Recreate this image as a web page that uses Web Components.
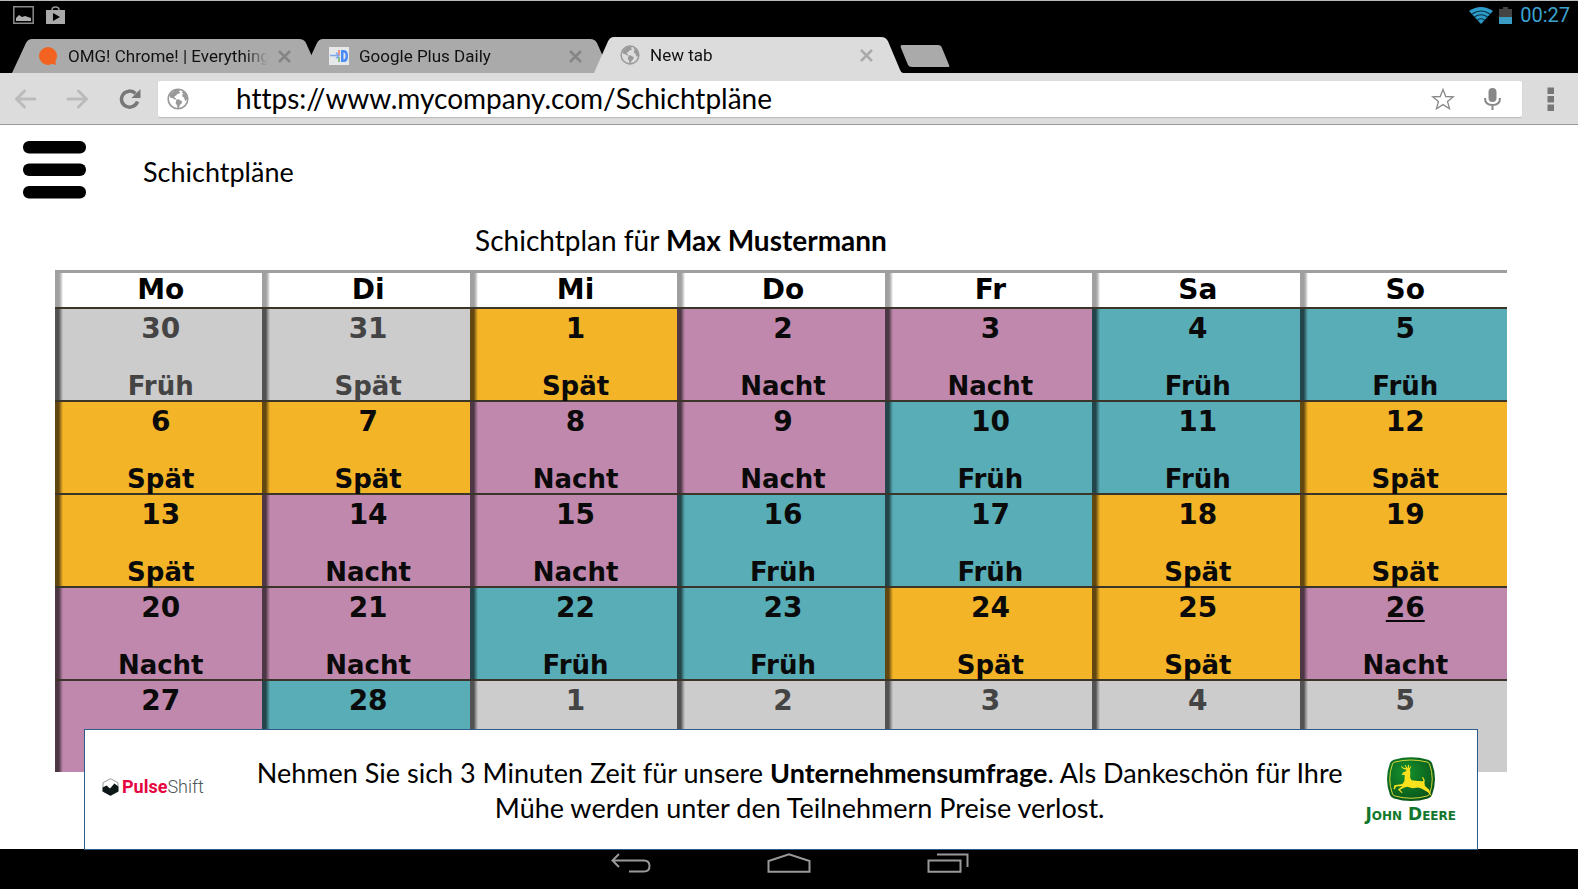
<!DOCTYPE html>
<html lang="de">
<head>
<meta charset="utf-8">
<title>Schichtpläne</title>
<style>
html, body { height: 100%; }
body { margin: 0; background: #fff; color: #000; font-family: Lato, "Noto Sans", sans-serif; font-size: 27px; font-variant-ligatures: none; }
</style>
</head>
<body>
<tablet-screen>
  <status-bar slot="status" time="00:27"></status-bar>
  <tab-strip slot="status">
    <browser-tab icon="omg">OMG! Chrome! | Everything</browser-tab>
    <browser-tab icon="daily">Google Plus Daily</browser-tab>
    <browser-tab icon="globe" active>New tab</browser-tab>
  </tab-strip>
  <address-bar slot="toolbar" url="https://www.mycompany.com/Schichtpläne"></address-bar>
  <page-header>Schichtpläne</page-header>
  <shift-calendar>Schichtplan für <b>Max Mustermann</b></shift-calendar>
  <survey-banner slot="overlay">Nehmen Sie sich 3 Minuten Zeit für unsere <b>Unternehmensumfrage</b>. Als Dankeschön für Ihre<br>Mühe werden unter den Teilnehmern Preise verlost.</survey-banner>
  <system-nav slot="nav"></system-nav>
</tablet-screen>

<script>
const define = (name, html, setup) => {
  const tpl = document.createElement('template');
  tpl.innerHTML = html;
  customElements.define(name, class extends HTMLElement {
    constructor() {
      super();
      this.attachShadow({ mode: 'open' }).append(tpl.content.cloneNode(true));
    }
    connectedCallback() { if (setup) setup(this, this.shadowRoot); }
  });
};

const globe = `<svg viewBox="0 0 22 22" aria-hidden="true"><circle cx="11" cy="11" r="9.8" fill="none" stroke="#999" stroke-width="1.6"/><path fill="#999" d="M4 5.5 8 2l4-.6 1 1.2-1.6 1 1.8.4-.6 1.6-2 .2-1.4 1.8-1.6.6-.2 1.4 1.2.4.6 1.4-1.2.2-1.6-1.2L3.200 9.400 2.500 7.600zM9.400 11.600l2.200-.4 3.600 2.200-.6 2.200-1.800 1.400-.8 3-1.400.6-.6-3.400-1.400-2zM14.600 4.200l2.200-.6 2.800 3.600.6 3.400-1.400 2.600-1.200-1.400-.4-2-1.800-1.200-.2-1.800 1.200-1z"/></svg>`;

const favicons = {
  omg: `<svg viewBox="0 0 20 20" aria-hidden="true"><circle cx="10" cy="10" r="9" fill="#f26322"/><path fill="#f26322" d="m12 17 6 2-1-7z"/></svg>`,
  daily: `<svg viewBox="0 0 20 20" aria-hidden="true"><path fill="#e6e8ea" d="M0 1h20v18H0z"/><path fill="#4b8bf5" d="M12 4h3q4 0 4 6t-4 6h-3zM14.500 6.500v7q2-.2 2-3.500t-2-3.500z" fill-rule="evenodd"/><path stroke="#7aa7ee" stroke-width="1.500" d="M1 9.500h8M7 6.500l3 3-3 3" fill="none"/><path fill="#e5938c" d="M9 4h2v5H9z"/><path fill="#84bd8d" d="M9 11h2v5H9z"/></svg>`,
  globe
};

define('tablet-screen', `
<style>
:host { display: flex; flex-direction: column; min-height: 100vh; }
.status { background: #000; border-top: 1px solid #bbb; }
main { flex: 1; position: relative; }
.overlay { position: absolute; left: 84px; right: 100px; bottom: -1px; z-index: 1; }
</style>
<div class="status"><slot name="status"></slot></div>
<slot name="toolbar"></slot>
<main><slot></slot><div class="overlay"><slot name="overlay"></slot></div></main>
<slot name="nav"></slot>`);

define('status-bar', `
<style>
:host { display: flex; align-items: center; height: 28px; padding: 0 8px 0 13px; font: 20px/28px Roboto, sans-serif; color: #3aa3cf; }
.gap { flex: 1; }
svg { display: block; flex: none; }
.store { margin-left: 12px; }
.battery { margin-left: 6px; }
time { margin-left: 8px; }
</style>
<svg width="21" height="18" viewBox="0 0 21 18" aria-hidden="true"><path fill="none" stroke="#8a8a8a" stroke-width="1.500" d="M.8.8h19.400v16.400H.8z"/><path fill="#b0b0b0" d="M3 15V12l3-3 3 2 3-1 3 1 3 1v3z"/></svg>
<svg class="store" width="19" height="18" viewBox="0 0 19 18" aria-hidden="true"><path fill="none" stroke="#999" stroke-width="1.500" d="M6 4Q6 1 9.500 1T13 4"/><path fill="#aaa" d="M0 4h19v14H0z"/><path d="m7 7 7 4-7 4z"/></svg>
<span class="gap"></span>
<svg width="24" height="17" viewBox="0 0 24 17" aria-hidden="true"><path fill="#2e9ac8" d="M0 4Q12-4 24 4L12 17z"/><path fill="none" stroke="#063040" stroke-width="1.200" d="M3 7Q12 1 21 7M5.500 10Q12 5.500 18.500 10M8.500 13Q12 10.500 15.500 13"/></svg>
<svg class="battery" width="13" height="17" viewBox="0 0 13 17" aria-hidden="true"><path fill="#444" d="M0 2h4V0h5v2h4v8H0z"/><path fill="#3a9cc4" d="M0 10h13v7H0z"/></svg>
<time></time>`, (el, root) => { root.querySelector('time').textContent = el.getAttribute('time'); });

define('tab-strip', `
<style>
:host { display: flex; align-items: flex-end; height: 44px; padding-left: 12px; }
button { border: 0; padding: 0; margin: 0 0 6px -3px; background: none; height: 22px; }
svg { display: block; }
</style>
<slot></slot>
<button aria-label="Neuer Tab"><svg width="50" height="22" viewBox="0 0 50 22"><path fill="#aaa" d="M2 0h36q3 0 4 3l7 17q1 2-1 2H12q-3 0-4-2L1 3Q0 0 2 0z"/></svg></button>`);

define('browser-tab', `
<style>
:host { display: grid; width: 309px; height: 34px; margin-right: -18px; --fill: #aaa; --cross: #858585; color: #111; }
:host([active]) { --fill: #dcdcdc; --cross: #aaa; height: 36px; z-index: 1; margin-right: 0; }
.shape, .row { grid-area: 1 / 1; }
.shape { width: 100%; height: 100%; display: block; }
.shape path { fill: var(--fill); }
.row { display: flex; align-items: center; padding: 0 30px 0 26px; min-width: 0; font: 17px/34px Roboto, sans-serif; }
.icon { width: 20px; height: 20px; flex: none; margin-right: 10px; }
.icon svg { display: block; width: 100%; height: 100%; }
.label { flex: 1; overflow: hidden; white-space: nowrap; -webkit-mask-image: linear-gradient(90deg, #000 88%, transparent 100%); }
button { border: 0; background: none; padding: 0; margin-left: 10px; width: 13px; height: 13px; }
button svg { display: block; stroke: var(--cross); }
</style>
<svg class="shape" viewBox="0 0 309 34" preserveAspectRatio="none" aria-hidden="true"><path d="M0 34 14 4Q16 0 20 0H287Q292 0 294 4L306 31Q307 34 309 34z"/></svg>
<div class="row"><span class="icon"></span><span class="label"><slot></slot></span><button aria-label="Tab schließen"><svg width="13" height="13" viewBox="0 0 13 13"><path stroke-width="2.500" d="m1 1 11 11M12 1 1 12"/></svg></button></div>`,
(el, root) => { root.querySelector('.icon').innerHTML = favicons[el.getAttribute('icon')]; });

define('address-bar', `
<style>
:host { display: flex; align-items: center; box-sizing: border-box; height: 52px; padding: 0 22px 0 14px; background: #dcdcdc; border-bottom: 1px solid #999; }
button { border: 0; background: none; padding: 0; flex: none; }
svg { display: block; }
.fwd { margin-left: 29px; }
.reload { margin: 0 17px 0 30px; }
.field { flex: 1; display: flex; align-items: center; min-width: 0; height: 36px; padding: 0 21px 0 9px; background: #fff; border-radius: 2px; box-shadow: 0 1px 1px #bbb; }
.globe { width: 22px; height: 22px; flex: none; }
input { flex: 1; min-width: 0; border: 0; outline: 0; background: none; font: inherit; font-size: 28px; font-variant-ligatures: none; color: #000; padding: 0 0 2px; margin: 0 20px 0 47px; height: 34px; box-sizing: border-box; }
.mic { margin-left: 29px; }
.menu { margin-left: 24px; }
</style>
<button aria-label="Zurück"><svg width="23" height="20" viewBox="0 0 23 20"><path fill="none" stroke="#bbb" stroke-width="3" stroke-linecap="round" stroke-linejoin="round" d="M10.500 2 2.500 10l8 8M3 10h18"/></svg></button>
<button class="fwd" aria-label="Vorwärts"><svg width="23" height="20" viewBox="0 0 23 20"><path fill="none" stroke="#bbb" stroke-width="3" stroke-linecap="round" stroke-linejoin="round" d="m12.500 2 8 8-8 8M20 10H2"/></svg></button>
<button class="reload" aria-label="Neu laden"><svg width="22" height="20" viewBox="0 0 22 20"><path fill="none" stroke="#777" stroke-width="3.500" d="M18.500 12.500A8.200 8 0 1 1 16.500 4.500"/><path fill="#777" d="M21.500 0v9h-9z"/></svg></button>
<div class="field"><span class="globe">${globe}</span><input type="text" aria-label="Adresse">
<button aria-label="Lesezeichen"><svg width="24" height="22" viewBox="0 0 24 22"><path fill="none" stroke="#888" stroke-width="1.300" d="m12 1.500 2.800 7 7.600.3-5.900 4.700 2 7.200L12 16.600l-6.500 4.100 2-7.200L1.600 8.800l7.600-.3z"/></svg></button>
<button class="mic" aria-label="Sprachsuche"><svg width="17" height="22" viewBox="0 0 17 22"><rect x="4.500" width="8" height="14" rx="4" fill="#888"/><path fill="none" stroke="#888" stroke-width="2" d="M1 10q0 7 7.500 7T16 10M8.500 17v5"/></svg></button></div>
<button class="menu" aria-label="Menü"><svg width="10" height="24" viewBox="0 0 10 24"><path fill="#777" d="M1.500.500h6.500V7H1.500zM1.500 9h6.500v6.500H1.500zM1.500 17.500h6.500V24H1.500z"/></svg></button>`,
(el, root) => { root.querySelector('input').value = el.getAttribute('url'); });

define('page-header', `
<style>
:host { display: flex; align-items: flex-start; padding: 16px 23px 0; }
button { border: 0; background: none; padding: 0; }
svg { display: block; }
h1 { margin: 13px 0 0 57px; font: inherit; line-height: 36px; }
</style>
<button aria-label="Navigation"><svg width="63" height="58" viewBox="0 0 63 58"><rect width="63" height="12.500" rx="6"/><rect y="22.500" width="63" height="12.500" rx="6"/><rect y="45" width="63" height="12.500" rx="6"/></svg></button>
<h1><slot></slot></h1>`);

const F = 'Früh', S = 'Spät', N = 'Nacht';
const weeks = [
  [[30, F, 1], [31, S, 1], [1, S], [2, N], [3, N], [4, F], [5, F]],
  [[6, S], [7, S], [8, N], [9, N], [10, F], [11, F], [12, S]],
  [[13, S], [14, N], [15, N], [16, F], [17, F], [18, S], [19, S]],
  [[20, N], [21, N], [22, F], [23, F], [24, S], [25, S], [26, N, 0, 1]],
  [[27, N], [28, F], [1, S, 1], [2, S, 1], [3, N, 1], [4, N, 1], [5, F, 1]]
];
const tone = { [F]: 'early', [S]: 'late', [N]: 'night' };

define('shift-calendar', `
<style>
:host { display: block; padding: 0 71px 0 55px; }
h2 { margin: 23px 200px 12px 0; font: inherit; font-size: 28px; line-height: 36px; text-align: center; }
table { width: 100%; table-layout: fixed; border-collapse: separate; border-spacing: 0; border-top: 3px solid #9f9f9f; font-family: "DejaVu Sans", sans-serif; font-weight: 700; text-align: center; }
th { height: 34px; padding: 0 0 0 4px; font-size: 28px; line-height: 32px; background: linear-gradient(90deg, #a0a0a0 4px, #c4c4c4 6px, transparent 8px); box-sizing: border-box; }
td { height: 93px; box-sizing: border-box; padding: 2px 0 0 4px; border-top: 2px solid #3b3429; vertical-align: top; color: #0a0a0a;
  background-image: linear-gradient(90deg, #0009 4px, #0006 5px, transparent 8px); }
.early { background-color: #58adb7; }
.late { background-color: #f4b427; }
.night { background-color: #c088ac; }
.other { background-color: #ccc; color: #444; }
.day, .shift { display: block; }
.day { font-size: 28px; line-height: 36px; }
.shift { font-size: 26px; line-height: 28px; margin-top: 25px; }
.today .day { text-decoration: underline; text-decoration-thickness: 2px; text-underline-offset: 3px; }
</style>
<h2><slot></slot></h2>
<table><thead><tr></tr></thead><tbody></tbody></table>`, (el, root) => {
  root.querySelector('thead tr').innerHTML = ['Mo', 'Di', 'Mi', 'Do', 'Fr', 'Sa', 'So'].map(d => `<th scope="col">${d}</th>`).join('');
  root.querySelector('tbody').innerHTML = weeks.map((week, w) => '<tr>' + week.map(([day, shift, other, today]) =>
    `<td class="${other ? 'other' : tone[shift]}${today ? ' today' : ''}"><span class="day">${day}</span>${w < 4 ? `<span class="shift">${shift}</span>` : ''}</td>`).join('') + '</tr>').join('');
});

define('pulse-logo', `
<style>
:host { display: flex; align-items: center; font: 18px/20px Roboto, sans-serif; color: #4a5656; padding-bottom: 6px; }
svg { display: block; margin-right: 3px; }
b { color: #e5063f; }
.thin { font-weight: 300; }
</style>
<svg width="17" height="18" viewBox="0 0 17 18" aria-hidden="true"><path fill="#fff" stroke="#999" d="m8.500.7 7.500 4v8.600l-7.500 4-7.500-4V4.700z"/><path fill="#0d1717" d="m.6 9.500 4-2 3.400 3 4.400-5 4 3v5l-7.900 4.300L.6 13.500z"/></svg><b>Pulse</b><span class="thin">Shift</span>`);

define('deere-logo', `
<style>
:host { display: flex; flex-direction: column; align-items: center; gap: 3px; color: #12772c; font: 700 17px/18px "DejaVu Sans", sans-serif; white-space: nowrap; }
svg { display: block; }
span { font-variant: small-caps; }
</style>
<svg width="50" height="45" viewBox="0 0 50 45" aria-hidden="true">
<defs><radialGradient id="g" cx=".4" cy=".35" r=".7"><stop offset="0" stop-color="#15932e"/><stop offset="1" stop-color="#075219"/></radialGradient></defs>
<path fill="url(#g)" d="M4 6Q5 3.500 8 2.700 25-2 42 2.700 45 3.500 46 6q6 16 0 32-1 2.500-4 3.400-17 5-34 0Q5 40.500 4 38-2 22 4 6z"/>
<path fill="none" stroke="#d2d63a" stroke-width="1" d="M6.500 7Q7 5.500 9 5 25 1 41 5q2 .5 2.500 2 5.500 15 0 30-.5 1.500-2.500 2-16 4.500-32 0-2-.5-2.500-2-5.500-15 0-30z"/>
<path fill="#f9e11e" d="M17 15.500l3-1.300.4-1.400-3.400-1-2.200-2.300.8-.3 2 1.600 2.500.5-1.300-3 .9-.2 1.700 3.400.8-3.700.9.1-.2 3.500 1.600-2.200.8.3-1.500 3.300.5 2.400-.2 5.300 1.400 2.800 6.500.7 4.500.3 1-.7-1.600-3.600 1.300.2 1.600 3-.4 2.600.6 3.200 4.200 3.800 1 3.200 1.800 3.800-4.400-4.700-6.200-3.500-3.400-1.100-5.400.8-5.200-1.500-3.200.6-4.200 2.300 2.700 3-1.100.3-3.700-3.500 4.600-3.500-6.200.6-1.800 2.900-1-.4.900-3.800 8-1.300 2-2.900.4-6.200-3.200-.1z"/></svg>
<span>John Deere</span>`);

define('survey-banner', `
<style>
:host { display: flex; align-items: center; box-sizing: border-box; height: 121px; padding: 0 21px 0 17px; background: #fff; border: 1px solid #2d5b8a; }
p { flex: 1; margin: 0; line-height: 35px; text-align: center; padding: 0 10px 0 40px; }
</style>
<pulse-logo></pulse-logo><p><slot></slot></p><deere-logo></deere-logo>`);

define('system-nav', `
<style>
:host { display: flex; justify-content: center; gap: 116px; height: 36px; padding: 4px 0 0 2px; background: #000; }
button { border: 0; background: none; padding: 0; height: 20px; }
svg { display: block; fill: none; stroke: #999; stroke-width: 2; }
</style>
<button aria-label="Zurück"><svg width="40" height="20" viewBox="0 0 40 20"><path d="M8 1 1.500 7.500 8 14M2 7.500h31q5.500 0 5.500 5.500T33 18.500H18"/></svg></button>
<button aria-label="Startseite"><svg width="44" height="20" viewBox="0 0 44 20"><path d="M1.500 18.700V8L22 1.200 42.500 8v10.700z"/></svg></button>
<button aria-label="Letzte Apps"><svg width="42" height="20" viewBox="0 0 42 20"><path d="M1.500 7.500h32v11.200h-32zM10 1.500h30.500V14"/></svg></button>`);
</script>
</body>
</html>
